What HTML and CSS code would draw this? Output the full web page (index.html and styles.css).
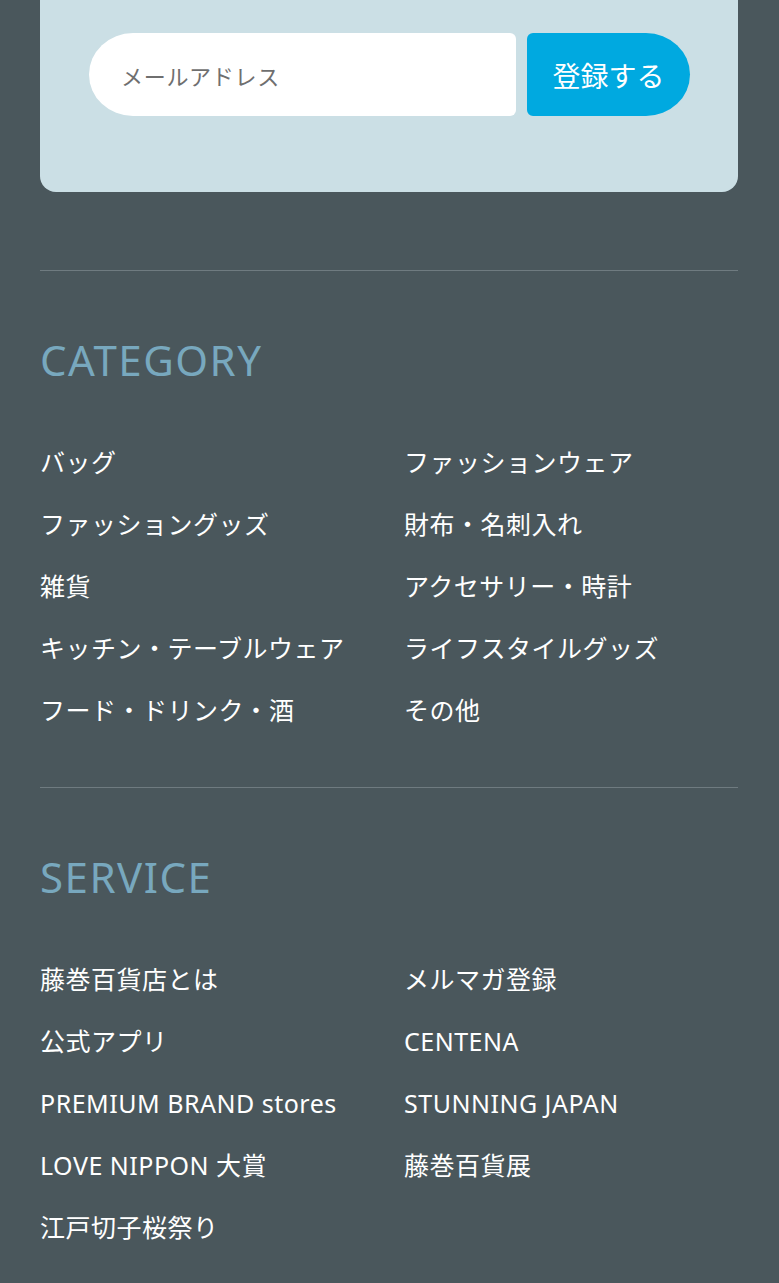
FILE: index.html
```html
<!DOCTYPE html>
<html lang="ja">
<head>
<meta charset="utf-8">
<title>Footer</title>
<link rel="stylesheet" href="styles.css">
</head>
<body>
<footer class="footer">
  <form class="newsletter">
    <input class="email" type="email" placeholder="メールアドレス">
    <button class="submit" type="button">登録する</button>
  </form>

  <section class="links">
    <h2 class="links-title">CATEGORY</h2>
    <ul class="links-list">
      <li><a href="#">バッグ</a></li>
      <li><a href="#">ファッションウェア</a></li>
      <li><a href="#">ファッショングッズ</a></li>
      <li><a href="#">財布・名刺入れ</a></li>
      <li><a href="#">雑貨</a></li>
      <li><a href="#">アクセサリー・時計</a></li>
      <li><a href="#">キッチン・テーブルウェア</a></li>
      <li><a href="#">ライフスタイルグッズ</a></li>
      <li><a href="#">フード・ドリンク・酒</a></li>
      <li><a href="#">その他</a></li>
    </ul>
  </section>

  <section class="links">
    <h2 class="links-title">SERVICE</h2>
    <ul class="links-list">
      <li><a href="#">藤巻百貨店とは</a></li>
      <li><a href="#">メルマガ登録</a></li>
      <li><a href="#">公式アプリ</a></li>
      <li><a href="#">CENTENA</a></li>
      <li><a href="#">PREMIUM BRAND stores</a></li>
      <li><a href="#">STUNNING JAPAN</a></li>
      <li><a href="#">LOVE NIPPON 大賞</a></li>
      <li><a href="#">藤巻百貨展</a></li>
      <li><a href="#">江戸切子桜祭り</a></li>
    </ul>
  </section>
</footer>
</body>
</html>
```

FILE: styles.css
```css
html, body {
  margin: 0;
  padding: 0;
  background: #4a575c;
}

body {
  font-family: "Noto Sans", "Noto Sans CJK JP", sans-serif;
  color: #ffffff;
}

.footer {
  padding: 0 41px 0 40px;
}

.newsletter {
  display: flex;
  gap: 11px;
  margin: 0;
  padding: 33px 48px 76px 49px;
  background: #cbdfe5;
  border-radius: 0 0 16px 16px;
}

.email {
  flex: 1;
  min-width: 0;
  height: 83px;
  box-sizing: border-box;
  border: none;
  outline: none;
  background: #ffffff;
  border-radius: 44px 6px 6px 44px / 41.5px 6px 6px 41.5px;
  padding: 0 0 0 32px;
  font-family: "Noto Sans CJK JP", sans-serif;
  font-size: 22px;
  letter-spacing: 0.7px;
  color: #333;
}

.email::placeholder {
  color: #6f6f6f;
  opacity: 1;
}

.submit {
  width: 163px;
  height: 83px;
  flex: none;
  border: none;
  background: #00a9e0;
  color: #ffffff;
  border-radius: 6px 44px 44px 6px / 6px 41.5px 41.5px 6px;
  font-family: "Noto Sans CJK JP", sans-serif;
  font-size: 28px;
  padding: 0;
}

.links {
  border-top: 1px solid #6f7b80;
  margin-top: 78px;
  padding: 68px 0 0;
}

.links + .links {
  margin-top: 45px;
}

.links-title {
  margin: 0;
  font-size: 42px;
  line-height: 1;
  font-weight: 400;
  letter-spacing: 1.5px;
  color: #78a8be;
}

.links-list {
  list-style: none;
  margin: 51px 0 0;
  padding: 0;
  display: grid;
  grid-template-columns: 334px 1fr;
  column-gap: 30px;
  grid-auto-rows: 62px;
  align-items: center;
}

.links-list a {
  color: #ffffff;
  text-decoration: none;
  font-size: 25px;
  line-height: 1;
  letter-spacing: 0.5px;
  white-space: nowrap;
}
```
